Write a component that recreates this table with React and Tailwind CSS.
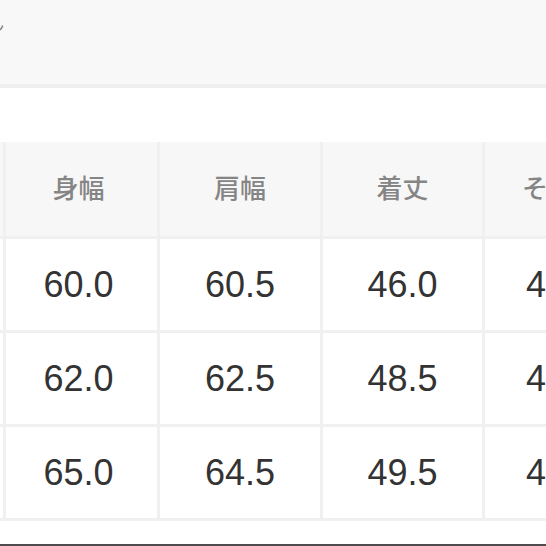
import React from "react";

const headers = ["着丈", "身幅", "肩幅", "着丈", "そで丈"];
const rows = [
  ["S", "60.0", "60.5", "46.0", "45.0"],
  ["M", "62.0", "62.5", "48.5", "46.5"],
  ["L", "65.0", "64.5", "49.5", "48.0"],
];

const cols = "grid grid-cols-[3px_151px_160px_159px_152px] gap-[3px]";

const App = () => {
  return (
    <div className="w-[546px] h-[546px] overflow-hidden bg-white flex flex-col" style={{ fontFamily: '"Liberation Sans", "Noto Sans CJK JP", sans-serif' }}>
      {/* top bar */}
      <div className="h-[84px] bg-[#f8f8f8] flex flex-col pt-[16px] gap-[10px]">
        <span className="ml-[-13px] text-[17px] leading-none text-[#7a7a7a]">ん</span>
        <span className="ml-[-14px] text-[14px] leading-none text-[#d8d8d8]">ス</span>
      </div>
      <div className="h-[4px] bg-[#efefef]" />
      <div className="h-[54px]" />

      {/* table */}
      <div className={`${cols} bg-[#f0f0f0] pb-[3px] w-max`}>
        {headers.map((h, i) => (
          <div
            key={i}
            className={`h-[94px] bg-[#f7f7f7] flex items-center justify-center overflow-hidden whitespace-nowrap text-[26px] font-medium text-[#858585] ${i === 1 ? "pr-[6px]" : ""}`}
          >
            {i === 0 ? "" : h}
          </div>
        ))}
        {rows.map((r, ri) =>
          r.map((v, i) => (
            <div
              key={ri + "-" + i}
              className={`h-[91px] bg-white flex items-center justify-center overflow-hidden whitespace-nowrap text-[36px] text-[#333333] ${i === 1 ? "pr-[6px]" : ""}`}
            >
              {i === 0 ? "" : v}
            </div>
          ))
        )}
      </div>

      <div className="flex-1" />
      <div className="h-[2px] bg-[#4d4d4d]" />
    </div>
  );
};

export default App;
